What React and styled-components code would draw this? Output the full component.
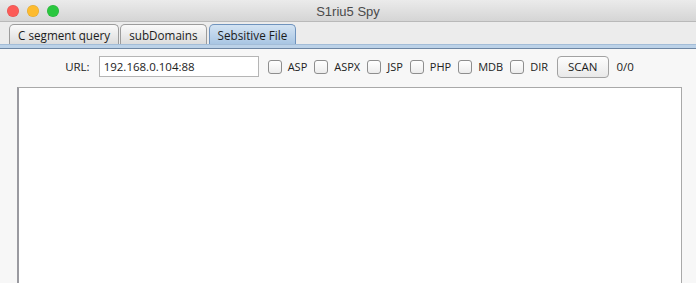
import React from 'react';
import styled, { createGlobalStyle } from 'styled-components';

const GlobalStyle = createGlobalStyle`
  html, body {
    margin: 0;
    padding: 0;
    height: 100%;
    overflow: hidden;
    background: #ececec;
    font-family: 'Open Sans', 'DejaVu Sans', sans-serif;
    font-size: 11.5px;
    color: #222;
  }
  #root {
    height: 100%;
  }
`

const Window = styled.div`
  height: 100vh;
  display: flex;
  flex-direction: column;
`

const TitleBar = styled.header`
  height: 21px;
  flex: none;
  display: grid;
  grid-template-columns: 1fr auto 1fr;
  align-items: center;
  padding: 0 7px;
  background: linear-gradient(#ebebeb, #d5d5d5);
  border-bottom: 1px solid #b9b9b9;
`

const Lights = styled.div`
  display: flex;
  gap: 8px;
`

const Light = styled.span`
  width: 12px;
  height: 12px;
  border-radius: 50%;
  background: ${p => p.color};
  box-shadow: inset 0 0 0 0.5px rgba(0, 0, 0, 0.12);
`

const Title = styled.div`
  font-family: 'Liberation Sans', Arial, sans-serif;
  font-size: 13px;
  color: #4a4a4a;
  padding-top: 1px;
`

const TabStrip = styled.nav`
  flex: none;
  display: flex;
  align-items: flex-end;
  gap: 1px;
  padding: 2px 0 0 9px;
  background: #ececec;
`

const Tab = styled.div`
  height: 19px;
  padding: 0 8px;
  display: flex;
  align-items: center;
  border: 1px solid ${p => (p.active ? '#6f93bd' : '#9c9c9c')};
  border-bottom: none;
  border-radius: 5px 5px 0 0;
  background: ${p =>
    p.active
      ? 'linear-gradient(#d3e3f3, #a9c6e3)'
      : 'linear-gradient(#fafafa, #dcdcdc)'};
  color: #1c1c1c;
  font-size: 11.7px;
  white-space: nowrap;
  margin-left: ${p => (p.active ? '1px' : '0')};
`

const TabLine = styled.div`
  flex: none;
  height: 3px;
  background: #bcd2e8;
  border-top: 1px solid #a3bdd8;
  border-bottom: 1px solid #6e86a3;
`

const Panel = styled.main`
  flex: 1;
  display: flex;
  flex-direction: column;
  gap: 9px;
  padding: 6px 14px 0 17px;
  background: #f7f7f7;
  min-height: 0;
`

const Toolbar = styled.div`
  display: flex;
  justify-content: center;
  align-items: center;
  height: 23px;
`

const Label = styled.span`
  margin-right: 9px;
  color: #222;
`

const UrlInput = styled.input`
  width: 150px;
  height: 19px;
  padding: 0 4px;
  border: 1px solid #b5b5b5;
  background: #fff;
  font-family: inherit;
  font-size: 11.5px;
  color: #1c1c1c;
  outline: none;
  margin-right: 9px;
`

const Check = styled.label`
  display: flex;
  align-items: center;
  gap: 6px;
  margin-right: 7px;
  font-size: 11px;
  color: #222;
`

const Box = styled.span`
  width: 12px;
  height: 12px;
  border: 1px solid #8e8e8e;
  border-radius: 3px;
  background: linear-gradient(#ffffff, #ececec);
`

const ScanButton = styled.button`
  height: 22px;
  padding: 0 10px;
  border: 1px solid #a2a2a2;
  border-radius: 4px;
  background: linear-gradient(#fdfdfd, #e9e9e9);
  font-family: inherit;
  font-size: 11.5px;
  color: #1c1c1c;
  margin-right: 8px;
  margin-left: 2px;
`

const Count = styled.span`
  color: #222;
`

const Output = styled.div`
  flex: 1;
  background: #fff;
  border: 1px solid #a9a9a9;
  border-left: 2px solid #9a9aa0;
  border-bottom: none;
`

const types = ['ASP', 'ASPX', 'JSP', 'PHP', 'MDB', 'DIR'];

const App = () => {
  return (
    <Window>
      <GlobalStyle />
      <TitleBar>
        <Lights>
          <Light color="#fc5b57" />
          <Light color="#fdbb2e" />
          <Light color="#2ac73f" />
        </Lights>
        <Title>S1riu5 Spy</Title>
        <div />
      </TitleBar>
      <TabStrip>
        <Tab>C segment query</Tab>
        <Tab>subDomains</Tab>
        <Tab active>Sebsitive File</Tab>
      </TabStrip>
      <TabLine />
      <Panel>
        <Toolbar>
          <Label>URL:</Label>
          <UrlInput defaultValue="192.168.0.104:88" />
          {types.map(t => (
            <Check key={t}>
              <Box />
              {t}
            </Check>
          ))}
          <ScanButton>SCAN</ScanButton>
          <Count>0/0</Count>
        </Toolbar>
        <Output />
      </Panel>
    </Window>
  );
};

export default App;
